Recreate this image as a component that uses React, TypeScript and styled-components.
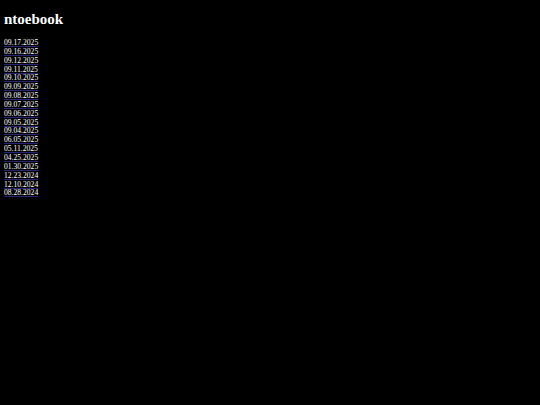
import { createGlobalStyle } from "styled-components";
import styled from "styled-components";

const GlobalStyle = createGlobalStyle`
  html, body {
    background: #000;
  }
  body {
    margin: 4px;
    color: #fff;
    font-family: "Liberation Serif", "Times New Roman", serif;
  }
`;

const Title = styled.h1`
  margin: 7px 0 11px;
  font-size: 15px;
  font-weight: 700;
  line-height: 17px;
`;

const EntryList = styled.nav`
  display: flex;
  flex-direction: column;
  align-items: flex-start;
`;

const Entry = styled.a`
  display: block;
  font-size: 7.6px;
  line-height: 8.85px;
  color: #fff;
  text-decoration: underline;
  text-decoration-color: #23237a;
`;

const dates = [
  "09.17.2025",
  "09.16.2025",
  "09.12.2025",
  "09.11.2025",
  "09.10.2025",
  "09.09.2025",
  "09.08.2025",
  "09.07.2025",
  "09.06.2025",
  "09.05.2025",
  "09.04.2025",
  "06.05.2025",
  "05.11.2025",
  "04.25.2025",
  "01.30.2025",
  "12.23.2024",
  "12.10.2024",
  "08.28.2024",
];

export default function App() {
  return (
    <>
      <GlobalStyle />
      <Title>ntoebook</Title>
      <EntryList>
        {dates.map((d) => (
          <Entry key={d} href={`#${d}`}>
            {d}
          </Entry>
        ))}
      </EntryList>
    </>
  );
}
